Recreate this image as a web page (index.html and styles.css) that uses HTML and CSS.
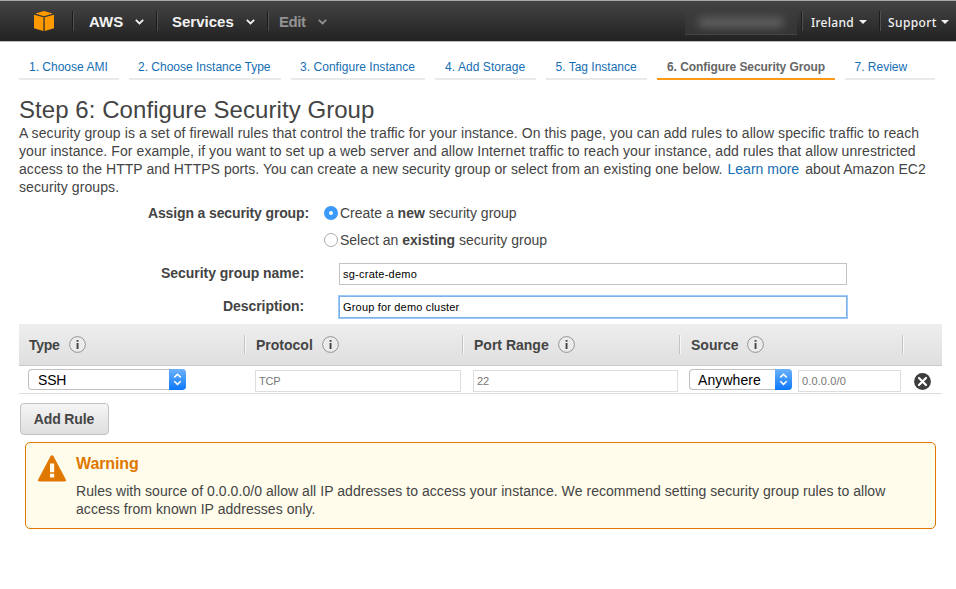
FILE: index.html
```html
<!DOCTYPE html>
<html lang="en">
<head>
<meta charset="utf-8">
<title>Step 6: Configure Security Group</title>
<link rel="stylesheet" href="styles.css">
</head>
<body>
<header class="topbar">
  <svg class="logo" width="20" height="20" viewBox="0 0 20 20"><path fill="#ff9900" d="M10 0 18.7 2.5 10 5.2 1.3 2.5ZM0 3.7 9.4 6.3V20L0 17.3ZM20 3.7 10.7 6.3V20L20 17.3Z"/></svg>
  <nav class="menus">
    <a class="menu menu-aws">AWS <svg width="9" height="6" viewBox="0 0 9 6"><path d="M.8.9 4.5 4.4 8.2.9"/></svg></a>
    <a class="menu menu-services">Services <svg width="9" height="6" viewBox="0 0 9 6"><path d="M.8.9 4.5 4.4 8.2.9"/></svg></a>
    <a class="menu menu-edit">Edit <svg width="9" height="6" viewBox="0 0 9 6"><path d="M.8.9 4.5 4.4 8.2.9"/></svg></a>
  </nav>
  <div class="account"><i></i></div>
  <nav class="links">
    <a class="link link-region">Ireland <i class="caret"></i></a>
    <a class="link link-support">Support <i class="caret"></i></a>
  </nav>
</header>

<ol class="steps">
  <li class="step s1">1. Choose AMI</li>
  <li class="step s2">2. Choose Instance Type</li>
  <li class="step s3">3. Configure Instance</li>
  <li class="step s4">4. Add Storage</li>
  <li class="step s5">5. Tag Instance</li>
  <li class="step s6 current">6. Configure Security Group</li>
  <li class="step s7">7. Review</li>
</ol>

<main class="page">
  <h1>Step 6: Configure Security Group</h1>
  <p class="intro">A security group is a set of firewall rules that control the traffic for your instance. On this page, you can add rules to allow specific traffic to reach<br>your instance. For example, if you want to set up a web server and allow Internet traffic to reach your instance, add rules that allow unrestricted<br><span class="tight">access to the HTTP and HTTPS ports. You can create a new security group or select from an existing one below.</span> <a class="learn">Learn more</a> <span class="after">about Amazon EC2</span><br>security groups.</p>

  <form class="form">
    <div class="row assign">
      <span class="label">Assign a security group:</span>
      <div class="options">
        <label class="option"><i class="radio on"></i><span>Create a <b>new</b> security group</span></label>
        <label class="option"><i class="radio"></i><span>Select an <b>existing</b> security group</span></label>
      </div>
    </div>
    <div class="row name">
      <label class="label">Security group name:</label>
      <input class="field" type="text" value="sg-crate-demo">
    </div>
    <div class="row desc">
      <label class="label">Description:</label>
      <input class="field focused" type="text" value="Group for demo cluster">
    </div>
  </form>

  <section class="rules">
    <div class="grid head">
      <div class="cell">Type <svg class="info" width="17" height="17" viewBox="0 0 17 17"><circle cx="8.5" cy="8.5" r="7.9"/><path d="M7.6 4h1.9v1.8H7.6zM7.6 7h1.9v6H7.6z"/></svg></div>
      <div class="cell">Protocol <svg class="info" width="17" height="17" viewBox="0 0 17 17"><circle cx="8.5" cy="8.5" r="7.9"/><path d="M7.6 4h1.9v1.8H7.6zM7.6 7h1.9v6H7.6z"/></svg></div>
      <div class="cell">Port Range <svg class="info" width="17" height="17" viewBox="0 0 17 17"><circle cx="8.5" cy="8.5" r="7.9"/><path d="M7.6 4h1.9v1.8H7.6zM7.6 7h1.9v6H7.6z"/></svg></div>
      <div class="cell">Source <svg class="info" width="17" height="17" viewBox="0 0 17 17"><circle cx="8.5" cy="8.5" r="7.9"/><path d="M7.6 4h1.9v1.8H7.6zM7.6 7h1.9v6H7.6z"/></svg></div>
      <div class="cell"></div>
    </div>
    <div class="grid rule">
      <div class="slot"><div class="select ssh"><span>SSH</span><svg width="17" height="21" viewBox="0 0 17 21"><path d="M5.3 8.4 8.5 5.3l3.2 3.1M5.3 12.3l3.2 3.1 3.2-3.1"/></svg></div></div>
      <div class="slot"><input class="readonly protocol" value="TCP" readonly></div>
      <div class="slot"><input class="readonly port" value="22" readonly></div>
      <div class="slot source"><div class="select anywhere"><span>Anywhere</span><svg width="17" height="21" viewBox="0 0 17 21"><path d="M5.3 8.4 8.5 5.3l3.2 3.1M5.3 12.3l3.2 3.1 3.2-3.1"/></svg></div><input class="readonly cidr" value="0.0.0.0/0" readonly></div>
      <div class="slot"><svg class="remove" width="17" height="17" viewBox="0 0 17 17"><circle cx="8.5" cy="8.5" r="8.4" fill="#3d3d3d"/><path d="m5 5 7 7m0-7-7 7" stroke="#fff" stroke-width="2.2" stroke-linecap="round"/></svg></div>
    </div>
  </section>

  <button class="add" type="button">Add Rule</button>

  <aside class="warning">
    <svg class="warn-icon" width="28" height="27" viewBox="0 0 28 27"><path fill="#e07700" d="M12.5 1.2Q14-.8 15.5 1.2L27.8 24.4Q28.4 26.5 26.5 26.6H1.5Q-.4 26.5.2 24.4Z"/><path fill="#fffceb" d="M12 8.5h4.2v8.7H12zM12 18.8h4.2v3.7H12z"/></svg>
    <div>
      <h2>Warning</h2>
      <p>Rules with source of 0.0.0.0/0 allow all IP addresses to access your instance. We recommend setting security group rules to allow<br>access from known IP addresses only.</p>
    </div>
  </aside>
</main>
</body>
</html>
```
FILE: styles.css
```css
* { box-sizing: border-box; }

body {
  margin: 0;
  height: 589px;
  overflow: hidden;
  background: #fff;
  color: #444;
  font: 14px/18px "Liberation Sans", Arial, sans-serif;
}

/* Top bar */
.topbar {
  display: flex;
  align-items: flex-start;
  height: 42px;
  padding-left: 34px;
  border-top: 1px solid #a3a7a5;
  border-bottom: 1px solid #bbb;
  background: linear-gradient(#444, #222);
}
.logo { margin-top: 10px; }
.menus { display: flex; margin: 10px 0 0 18px; }
.menu, .link {
  display: flex;
  align-items: center;
  height: 20px;
  border-left: 1px solid #1c1c1c;
  box-shadow: inset 1px 0 #505050;
  color: #f2f2f2;
  white-space: nowrap;
}
.menu { font-size: 15px; font-weight: bold; padding: 2px 0 0 16px; }
.menu svg { fill: none; stroke: currentColor; stroke-width: 1.8; }
.menu-aws { width: 84px; }
.menu-aws svg { margin-left: 12px; }
.menu-services { width: 111px; padding-left: 15px; }
.menu-services svg { margin-left: 12px; }
.menu-edit { color: #929292; padding-left: 11px; letter-spacing: -.45px; }
.menu-edit svg { margin-left: 12px; }
.account {
  display: flex;
  align-items: center;
  justify-content: center;
  width: 112px;
  height: 25px;
  margin: 9px 0 0 auto;
  background: linear-gradient(#3d3d3d, #343434);
  border-bottom: 1px solid #444;
}
.account i { width: 84px; height: 9px; background: #666; filter: blur(5px); }
.links { display: flex; margin: 10px 0 0 4px; }
.link { font: 500 12px/20px "Noto Sans", sans-serif; padding-top: 3px; }
.link-region { width: 78px; padding-left: 9px; letter-spacing: .26px; }
.link-support { width: 77px; padding-left: 8px; letter-spacing: .38px; }
.caret {
  margin: -2px 0 0 5px;
  border: 4px solid transparent;
  border-top-color: #f2f2f2;
  border-bottom: 0;
}
.link-support .caret { margin-left: 4px; }

/* Wizard steps */
.steps {
  display: flex;
  gap: 10px;
  margin: 16px 0 0 19px;
  padding: 0;
  list-style: none;
  font-size: 12px;
}
.step {
  height: 22px;
  padding-left: 10px;
  border-bottom: 2px solid #eaeaea;
  color: #146eb4;
  line-height: 19px;
  white-space: nowrap;
}
.s1 { width: 100px; }
.s2 { width: 152px; padding-left: 9px; }
.s3 { width: 134px; padding-left: 9px; letter-spacing: .044px; }
.s4 { width: 101px; letter-spacing: .067px; }
.s5 { width: 101px; padding-left: 9.5px; }
.s6 { width: 178px; }
.s7 { width: 90px; padding-left: 9.5px; }
.step.current {
  border-color: #ff9916;
  color: #666;
  font-weight: bold;
  letter-spacing: -.07px;
}

/* Page */
.page { padding: 16px 0 0 19px; }
h1 {
  margin: 0;
  font-size: 24px;
  font-weight: normal;
  line-height: 28px;
  letter-spacing: .06px;
}
.intro { margin: 0; letter-spacing: .083px; white-space: nowrap; }
.tight { letter-spacing: .046px; }
.learn { margin-left: 1px; color: #146eb4; letter-spacing: 0; }
.after { margin-left: 2px; letter-spacing: 0; }

/* Form */
.form { padding-top: 8px; }
.row { display: flex; }
.label { width: 285px; font-weight: bold; text-align: right; letter-spacing: -.05px; }
.assign .label { width: 290px; letter-spacing: -.13px; }
.options { display: flex; flex-direction: column; gap: 9px; margin-left: 15px; }
.option { display: flex; align-items: center; gap: 2px; }
.radio { width: 14px; height: 14px; border: 1px solid #aaa; border-radius: 50%; background: #fff; }
.radio.on { border: 5px solid #3b99fc; }
.field {
  width: 508px;
  height: 22px;
  margin-left: 35px;
  padding: 0 3px;
  border: 1px solid #c3c3c3;
  outline: 0;
  background: #fff;
  color: #000;
  font: 11px "Liberation Sans", sans-serif;
  letter-spacing: .24px;
}
.name { margin-top: 14px; }
.name .label { margin-top: 1px; }
.desc { margin-top: 11px; }
.desc .label { margin-top: 1px; }
.focused { border-color: #7fb2e8; box-shadow: 0 0 0 1px #9cc9f8; letter-spacing: .18px; }

/* Rules table */
.rules { width: 923px; margin-top: 6px; }
.grid { display: grid; grid-template-columns: 225px 218px 217px 223px 40px; }
.head {
  height: 42px;
  align-items: center;
  border-bottom: 1px solid #c9c9c9;
  background: linear-gradient(#eee, #dfdfdf);
  font-weight: bold;
}
.cell {
  display: flex;
  align-items: center;
  height: 19px;
  padding-left: 11px;
  border-left: 1px solid #c4c4c4;
  box-shadow: inset 1px 0 #f8f8f8;
}
.cell:first-child { padding-left: 10px; border: 0; box-shadow: none; letter-spacing: -.25px; }
.info { margin-left: 9px; }
.info circle { fill: #ececec; stroke: #8a8a8a; stroke-width: .9; }
.info path { fill: #444; }
.rule { height: 28px; border-bottom: 1px solid #ddd; }
.slot { display: flex; align-items: flex-start; padding: 3px 0 0 11px; }
.slot:first-child { padding-left: 9px; }
.slot.source { padding-left: 10px; }
.select {
  display: flex;
  justify-content: space-between;
  height: 21px;
  border: 1px solid #c0c0c0;
  border-right: 0;
  border-radius: 4px;
  background: #fff;
  color: #000;
  line-height: 20px;
}
.select span { padding-left: 8px; }
.select svg {
  flex: none;
  margin-top: -1px;
  border-radius: 0 4px 4px 0;
  background: linear-gradient(#6bb2fb, #0e77fb);
  fill: none;
  stroke: #fff;
  stroke-width: 1.6;
}
.ssh { width: 158px; }
.ssh span { padding-left: 9px; letter-spacing: -.2px; }
.anywhere { width: 103px; letter-spacing: .09px; }
.readonly {
  height: 22px;
  margin-top: 1px;
  padding: 0 3px;
  border: 1px solid #ddd;
  outline: 0;
  background: #fff;
  color: #777;
  font: 11px "Liberation Sans", sans-serif;
}
.protocol { width: 206px; letter-spacing: -.2px; }
.port { width: 205px; }
.cidr { width: 103px; margin-left: 6px; letter-spacing: .13px; }
.remove { margin-top: 4px; margin-left: 1px; }

.add {
  display: block;
  width: 89px;
  height: 32px;
  margin: 9px 0 0 1px;
  padding: 0 1px 0 0;
  border: 1px solid #c2c2c2;
  border-radius: 4px;
  background: linear-gradient(#f5f5f5, #dedede);
  color: #444;
  font: bold 14px "Liberation Sans", sans-serif;
  letter-spacing: -.12px;
}

/* Warning */
.warning {
  display: flex;
  gap: 10px;
  width: 911px;
  height: 87px;
  margin: 7px 0 0 6px;
  padding: 12px 0 0 12px;
  border: 1px solid #e07700;
  border-radius: 5px;
  background: #fffceb;
}
.warning h2 {
  margin: 0;
  color: #e07700;
  font-size: 16px;
  line-height: 18px;
  letter-spacing: -.12px;
}
.warning p { margin: 9px 0 0; letter-spacing: .053px; white-space: nowrap; }
```
